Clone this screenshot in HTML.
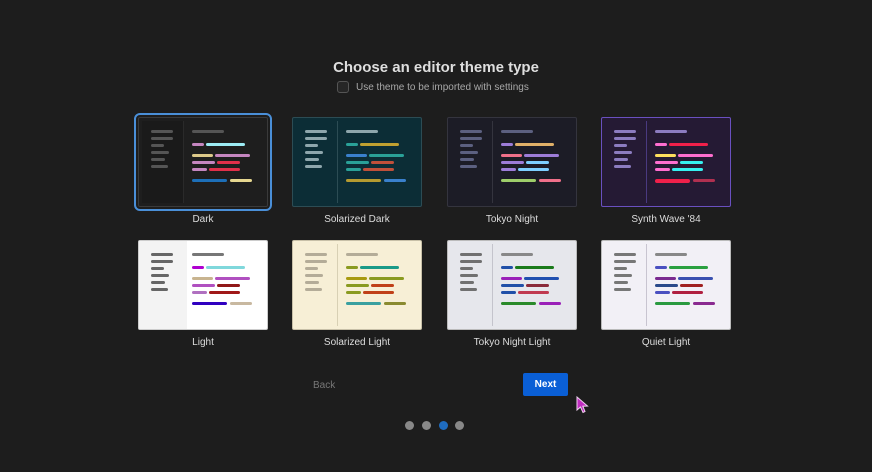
<!DOCTYPE html>
<html><head><meta charset="utf-8"><style>
*{margin:0;padding:0;box-sizing:border-box}
body{width:872px;height:472px;background:#1d1d1d;position:relative;overflow:hidden;font-family:"Liberation Sans",Arial,sans-serif}
.t{position:absolute;width:130px;height:90px;border:1px solid #3a3a3a;border-radius:2px;overflow:hidden}
.t i{position:absolute;height:3px;border-radius:2px;display:block}
.sb{position:absolute;left:3px;top:3px;bottom:3px;width:42px;border-right:1px solid rgba(128,128,128,.35)}
.s1{left:12px;top:12px;width:22px}.s2{left:12px;top:19px;width:22px}.s3{left:12px;top:26px;width:13px}
.s4{left:12px;top:33px;width:18px}.s5{left:12px;top:40px;width:14px}.s6{left:12px;top:47px;width:17px}
.h{left:53px;top:12px;width:32px}
.a1{left:53px;top:25px;width:12px}.b1{left:67px;top:25px;width:39px}
.a2{left:53px;top:36px;width:21px}.b2{left:76px;top:36px;width:35px}
.a3{left:53px;top:43px;width:23px}.b3{left:78px;top:43px;width:23px}
.a4{left:53px;top:50px;width:15px}.b4{left:70px;top:50px;width:31px}
.a5{left:53px;top:61px;width:35px}.b5{left:91px;top:61px;width:22px}
.lb{position:absolute;width:160px;text-align:center;font-size:10px;color:#ddd}
</style></head><body>
<div style="position:absolute;left:0;width:872px;top:59px;text-align:center;font-size:15px;font-weight:bold;color:#dedede">Choose an editor theme type</div>
<div style="position:absolute;left:337px;top:81px;width:12px;height:12px;border:1px solid #555;border-radius:3px;background:#262626"></div>
<div style="position:absolute;left:356px;top:82px;font-size:10px;color:#a8a8a8">Use theme to be imported with settings</div>

<div style="position:absolute;left:134px;top:113px;width:138px;height:98px;border:2px solid #4a8fd8;border-radius:6px"></div>

<!-- Dark -->
<div class="t" style="left:138px;top:117px;background:#1e1e1e">
<div class="sb" style="background:#1a1a1a;border-color:#2a2a2a"></div>
<i class="s1" style="background:#555"></i><i class="s2" style="background:#555"></i><i class="s3" style="background:#555"></i><i class="s4" style="background:#555"></i><i class="s5" style="background:#555"></i><i class="s6" style="background:#555"></i><i class="h" style="background:#555"></i>
<i class="a1" style="background:#c586c0"></i><i class="b1" style="background:#9cecf4"></i>
<i class="a2" style="background:#dcc98a"></i><i class="b2" style="background:#c586c0"></i>
<i class="a3" style="background:#c586c0"></i><i class="b3" style="background:#e0304a"></i>
<i class="a4" style="background:#c586c0"></i><i class="b4" style="background:#e0304a"></i>
<i class="a5" style="background:#1d6fb8"></i><i class="b5" style="background:#e6d790"></i>
</div>
<!-- Solarized Dark -->
<div class="t" style="left:292px;top:117px;background:#0c2d36;border-color:#2c4c54">
<div class="sb" style="border-color:#2c4c54"></div>
<i class="s1" style="background:#8ea6ac"></i><i class="s2" style="background:#8ea6ac"></i><i class="s3" style="background:#8ea6ac"></i><i class="s4" style="background:#8ea6ac"></i><i class="s5" style="background:#8ea6ac"></i><i class="s6" style="background:#8ea6ac"></i><i class="h" style="background:#8ea6ac"></i>
<i class="a1" style="background:#2aa198"></i><i class="b1" style="background:#c0a030"></i>
<i class="a2" style="background:#3a80cc"></i><i class="b2" style="background:#2aa198"></i>
<i class="a3" style="background:#2aa198"></i><i class="b3" style="background:#c0503a"></i>
<i class="a4" style="background:#2aa198"></i><i class="b4" style="background:#c0503a"></i>
<i class="a5" style="background:#b59a30"></i><i class="b5" style="background:#3a80cc"></i>
</div>
<!-- Tokyo Night -->
<div class="t" style="left:447px;top:117px;background:#1c1c26;border-color:#34343e">
<div class="sb" style="border-color:#34343e"></div>
<i class="s1" style="background:#5c6080"></i><i class="s2" style="background:#5c6080"></i><i class="s3" style="background:#5c6080"></i><i class="s4" style="background:#5c6080"></i><i class="s5" style="background:#5c6080"></i><i class="s6" style="background:#5c6080"></i><i class="h" style="background:#5c6080"></i>
<i class="a1" style="background:#9d7cd8"></i><i class="b1" style="background:#e0b068"></i>
<i class="a2" style="background:#f0708a"></i><i class="b2" style="background:#9d7cd8"></i>
<i class="a3" style="background:#9d7cd8"></i><i class="b3" style="background:#7dcfff"></i>
<i class="a4" style="background:#9d7cd8"></i><i class="b4" style="background:#7dcfff"></i>
<i class="a5" style="background:#9ece6a"></i><i class="b5" style="background:#f0708a"></i>
</div>
<!-- Synth Wave -->
<div class="t" style="left:601px;top:117px;background:#251a34;border-color:#6a50c0">
<div class="sb" style="border-color:#4a3a80"></div>
<i class="s1" style="background:#8c7cc0"></i><i class="s2" style="background:#8c7cc0"></i><i class="s3" style="background:#8c7cc0"></i><i class="s4" style="background:#8c7cc0"></i><i class="s5" style="background:#8c7cc0"></i><i class="s6" style="background:#8c7cc0"></i><i class="h" style="background:#8c7cc0"></i>
<i class="a1" style="background:#ff6ed0"></i><i class="b1" style="background:#f0204a"></i>
<i class="a2" style="background:#fede5d"></i><i class="b2" style="background:#ff6ed0"></i>
<i class="a3" style="background:#ff6ed0"></i><i class="b3" style="background:#36f0f0"></i>
<i class="a4" style="background:#ff6ed0"></i><i class="b4" style="background:#36f0f0"></i>
<i class="a5" style="background:#f0204a;height:4px"></i><i class="b5" style="background:#b03050"></i>
</div>

<div class="lb" style="left:123px;top:214px">Dark</div>
<div class="lb" style="left:277px;top:214px">Solarized Dark</div>
<div class="lb" style="left:432px;top:214px">Tokyo Night</div>
<div class="lb" style="left:586px;top:214px">Synth Wave '84</div>

<!-- Light -->
<div class="t" style="left:138px;top:240px;background:#fff;border-color:#ccc">
<div class="sb" style="background:#f3f3f3;border:none;left:0;top:0;bottom:0;width:48px"></div>
<i class="s1" style="background:#666"></i><i class="s2" style="background:#666"></i><i class="s3" style="background:#666"></i><i class="s4" style="background:#666"></i><i class="s5" style="background:#666"></i><i class="s6" style="background:#666"></i><i class="h" style="background:#777"></i>
<i class="a1" style="background:#b000d0"></i><i class="b1" style="background:#80d8dc"></i>
<i class="a2" style="background:#c8b490"></i><i class="b2" style="background:#b050c0"></i>
<i class="a3" style="background:#b050c0"></i><i class="b3" style="background:#901818"></i>
<i class="a4" style="background:#b070c0"></i><i class="b4" style="background:#a01818"></i>
<i class="a5" style="background:#3000c0"></i><i class="b5" style="background:#c8b8a0"></i>
</div>
<!-- Solarized Light -->
<div class="t" style="left:292px;top:240px;background:#f7efd6;border-color:#c8c0a8">
<div class="sb" style="border-color:#d8d0b4"></div>
<i class="s1" style="background:#b4ac98"></i><i class="s2" style="background:#b4ac98"></i><i class="s3" style="background:#b4ac98"></i><i class="s4" style="background:#b4ac98"></i><i class="s5" style="background:#b4ac98"></i><i class="s6" style="background:#b4ac98"></i><i class="h" style="background:#b4ac98"></i>
<i class="a1" style="background:#8a9a20"></i><i class="b1" style="background:#1a9a88"></i>
<i class="a2" style="background:#a89a10"></i><i class="b2" style="background:#8a9a20"></i>
<i class="a3" style="background:#8a9a20"></i><i class="b3" style="background:#c04018"></i>
<i class="a4" style="background:#8a9a20"></i><i class="b4" style="background:#c04018"></i>
<i class="a5" style="background:#3aa0a0"></i><i class="b5" style="background:#8a8a30"></i>
</div>
<!-- Tokyo Night Light -->
<div class="t" style="left:447px;top:240px;background:#e6e7ec;border-color:#bbb">
<div class="sb" style="border-color:#c4c4cc"></div>
<i class="s1" style="background:#707070"></i><i class="s2" style="background:#707070"></i><i class="s3" style="background:#707070"></i><i class="s4" style="background:#707070"></i><i class="s5" style="background:#707070"></i><i class="s6" style="background:#707070"></i><i class="h" style="background:#888"></i>
<i class="a1" style="background:#2050a8"></i><i class="b1" style="background:#1a7a1a"></i>
<i class="a2" style="background:#9a20b8"></i><i class="b2" style="background:#2050b0"></i>
<i class="a3" style="background:#2050a8"></i><i class="b3" style="background:#8a2a3a"></i>
<i class="a4" style="background:#2050a8"></i><i class="b4" style="background:#c03a50"></i>
<i class="a5" style="background:#2a8a2a"></i><i class="b5" style="background:#9a20b8"></i>
</div>
<!-- Quiet Light -->
<div class="t" style="left:601px;top:240px;background:#f2f0f6;border-color:#bbb">
<div class="sb" style="border-color:#c8c4d0"></div>
<i class="s1" style="background:#777"></i><i class="s2" style="background:#777"></i><i class="s3" style="background:#777"></i><i class="s4" style="background:#777"></i><i class="s5" style="background:#777"></i><i class="s6" style="background:#777"></i><i class="h" style="background:#888"></i>
<i class="a1" style="background:#4a50c0"></i><i class="b1" style="background:#2aa040"></i>
<i class="a2" style="background:#7a2a90"></i><i class="b2" style="background:#3a50b0"></i>
<i class="a3" style="background:#2a4a8a"></i><i class="b3" style="background:#a02020"></i>
<i class="a4" style="background:#4a50c0"></i><i class="b4" style="background:#b02040"></i>
<i class="a5" style="background:#2a9a40"></i><i class="b5" style="background:#8a2a90"></i>
</div>

<div class="lb" style="left:123px;top:337px">Light</div>
<div class="lb" style="left:277px;top:337px">Solarized Light</div>
<div class="lb" style="left:432px;top:337px">Tokyo Night Light</div>
<div class="lb" style="left:586px;top:337px">Quiet Light</div>

<div style="position:absolute;left:313px;top:380px;font-size:10px;color:#777">Back</div>
<div style="position:absolute;left:523px;top:373px;width:45px;height:23px;background:#0a5fd6;border-radius:2px;color:#fff;font-size:10px;font-weight:bold;text-align:center;line-height:23px">Next</div>
<svg style="position:absolute;left:576px;top:396px" width="14" height="18" viewBox="0 0 14 18"><path d="M1 1 L1 14 L4.5 11 L7 16.5 L9 15.5 L6.8 10.2 L11.5 10 Z" fill="#c02cc0" stroke="#f0d0f0" stroke-width="1"/></svg>

<div style="position:absolute;left:405px;top:421px;width:9px;height:9px;border-radius:50%;background:#888"></div>
<div style="position:absolute;left:422px;top:421px;width:9px;height:9px;border-radius:50%;background:#888"></div>
<div style="position:absolute;left:439px;top:421px;width:9px;height:9px;border-radius:50%;background:#1f6cbf"></div>
<div style="position:absolute;left:455px;top:421px;width:9px;height:9px;border-radius:50%;background:#888"></div>
</body></html>
